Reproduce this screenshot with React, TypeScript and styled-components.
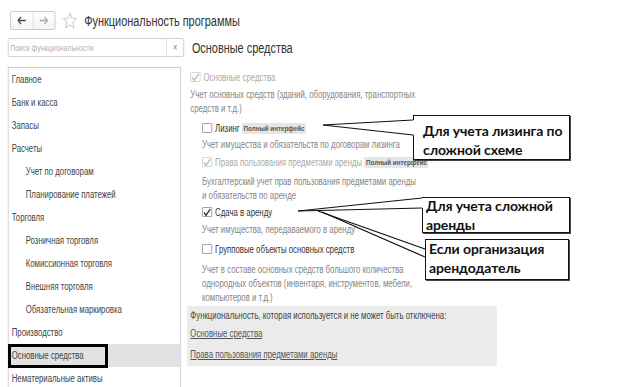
import React from "react";
import styled, { createGlobalStyle } from "styled-components";

// the screenshot is horizontally squeezed, so the 1C form is laid out
// at natural width and scaled on X
const SX = 0.78;

const Global = createGlobalStyle`
  html, body { margin: 0; padding: 0; background: #fff; }
  body { font-family: "Liberation Sans", Arial, sans-serif; overflow: hidden; }
`;

const Page = styled.div`
  position: relative;
  width: 620px;
  height: 387px;
  overflow: hidden;
  background: #fff;
`;

const Squeezed = styled.div`
  width: ${620 / SX}px;
  box-sizing: border-box;
  padding: 11px 0 0 10px;
  transform: scaleX(${SX});
  transform-origin: 0 0;
  color: #333;
`;

const TopRow = styled.div`
  display: flex;
  align-items: center;
  height: 19px;
`;

const NavGroup = styled.div`
  display: flex;
  width: 58px;
  height: 19px;
  margin-left: 3px;
  box-sizing: border-box;
  border: 1px solid #c6c6c6;
  border-radius: 2px;
  background: linear-gradient(#fff, #f4f4f4);
`;

const NavBtn = styled.div<{ $sep?: boolean }>`
  flex: 1;
  display: flex;
  align-items: center;
  justify-content: center;
  border-right: ${(p) => (p.$sep ? "1px solid #dcdcdc" : "none")};
`;

const StarWrap = styled.div`
  margin-left: 9px;
  display: flex;
`;

const Title = styled.div`
  margin-left: 9px;
  font-size: 14px;
  color: #333;
`;

const SearchRow = styled.div`
  display: flex;
  align-items: center;
  margin-top: 8px;
  height: 19px;
`;

const SearchBox = styled.div`
  display: flex;
  width: 226px;
  height: 19px;
  box-sizing: border-box;
  border: 1px solid #cbcbcb;
  border-radius: 2px;
`;

const Placeholder = styled.div`
  flex: 1;
  font-size: 9px;
  color: #b0b0b0;
  padding-left: 2px;
  display: flex;
  align-items: center;
`;

const Clear = styled.div`
  width: 21px;
  border-left: 1px solid #dedede;
  display: flex;
  align-items: center;
  justify-content: center;
  font-size: 10px;
  color: #888;
`;

const SectionTitle = styled.div`
  margin-left: 10px;
  font-size: 14px;
  color: #333;
`;

const Body = styled.div`
  display: flex;
  align-items: flex-start;
  margin-top: 10px;
`;

const NavPanel = styled.div`
  width: 222px;
  height: 330px;
  box-sizing: border-box;
  border: 1px solid #cacaca;
  border-bottom: none;
`;

const NavItem = styled.div<{ $level: number; $active?: boolean }>`
  height: 23px;
  display: flex;
  align-items: center;
  padding-left: ${(p) => (p.$level ? 22 : 4)}px;
  font-size: 10px;
  color: #444;
  background: ${(p) => (p.$active ? "#e2e2e2" : "transparent")};
`;

const Content = styled.div`
  margin-left: 8px;
  width: 397px;
`;

const OptionRow = styled.div<{ $indent: number; $mt: number }>`
  display: flex;
  align-items: center;
  height: 18px;
  margin-top: ${(p) => p.$mt}px;
  padding-left: ${(p) => p.$indent}px;
`;

const Box = styled.span<{ $disabled?: boolean }>`
  width: 12.8px;
  height: 10px;
  box-sizing: border-box;
  border: 1px solid ${(p) => (p.$disabled ? "#d0d0d0" : "#9a9a9a")};
  border-radius: 1px;
  background: #fff;
  display: flex;
  align-items: center;
  justify-content: center;
`;

const Label = styled.span<{ $disabled?: boolean }>`
  margin-left: 4px;
  font-size: 10px;
  color: ${(p) => (p.$disabled ? "#aaa" : "#333")};
`;

const Badge = styled.span`
  margin-left: 3px;
  padding: 1px 2px;
  font-size: 8px;
  font-weight: bold;
  color: #555;
  background: #e6e6e6;
`;

const Desc = styled.div<{ $indent: number; $mt: number }>`
  margin-top: ${(p) => p.$mt}px;
  padding-left: ${(p) => p.$indent}px;
  font-size: 10px;
  line-height: 14px;
  color: #858585;
`;

const InUse = styled.div`
  margin-top: 1px;
  height: 60px;
  box-sizing: border-box;
  padding: 3px 0 0 4px;
  background: #ebebeb;
  font-size: 10px;
  line-height: 14px;
  color: #444;
`;

const InUseLink = styled.div<{ $mt: number }>`
  margin-top: ${(p) => p.$mt}px;
  color: #555;
  text-decoration: underline;
`;

// annotations drawn over the screenshot
const Callout = styled.div<{ $x: number; $y: number; $w: number; $h: number; $pad: number }>`
  position: absolute;
  left: ${(p) => p.$x}px;
  top: ${(p) => p.$y}px;
  width: ${(p) => p.$w}px;
  height: ${(p) => p.$h}px;
  box-sizing: border-box;
  border: 1.5px solid #111;
  box-shadow: 1px 1px 0 #444;
  background: #fff;
  padding-left: ${(p) => p.$pad}px;
  font-family: "Lato", "Open Sans", "Noto Sans", sans-serif;
  font-weight: 700;
  font-size: 14px;
  line-height: 19px;
  color: #111;
  letter-spacing: -0.1px;
  white-space: nowrap;
`;

const CalloutText = styled.div<{ $mt: number }>`
  margin-top: ${(p) => p.$mt}px;
`;

const Marker = styled.div`
  position: absolute;
  left: 8px;
  top: 344px;
  width: 100px;
  height: 24px;
  box-sizing: border-box;
  border: 3px solid #000;
`;

const Lines = styled.svg`
  position: absolute;
  left: 0;
  top: 0;
  pointer-events: none;
`;

const Check = ({ color }: { color: string }) => (
  <svg width="11" height="9" viewBox="0 0 11 9" preserveAspectRatio="none">
    <path d="M1.5 4.5 L4.2 7.3 L9.8 1" fill="none" stroke={color} strokeWidth="1.6" />
  </svg>
);

type State = "off" | "on" | "on-disabled";

interface Option {
  label: string;
  level: number;
  state: State;
  badge?: boolean;
  desc: string[];
  mt: number;
  dmt: number;
}

const options: Option[] = [
  {
    label: "Основные средства",
    level: 0,
    state: "on-disabled",
    desc: ["Учет основных средств (зданий, оборудования, транспортных", "средств и т.д.)"],
    mt: 1,
    dmt: 2,
  },
  {
    label: "Лизинг",
    level: 1,
    state: "off",
    badge: true,
    desc: ["Учет имущества и обязательств  по договорам лизинга"],
    mt: 3,
    dmt: 1,
  },
  {
    label: "Права пользования предметами аренды",
    level: 1,
    state: "on-disabled",
    badge: true,
    desc: ["Бухгалтерский учет прав пользования предметами аренды", "и обязательств по аренде"],
    mt: 1,
    dmt: 4,
  },
  {
    label: "Сдача в аренду",
    level: 1,
    state: "on",
    desc: ["Учет имущества, передаваемого в аренду"],
    mt: 0,
    dmt: 2,
  },
  {
    label: "Групповые объекты основных средств",
    level: 1,
    state: "off",
    desc: [
      "Учет в составе основных средств большого количества",
      "однородных объектов (инвентаря, инструментов, мебели,",
      "компьютеров и т.д.)",
    ],
    mt: 3,
    dmt: 5,
  },
];

const navItems: [string, number][] = [
  ["Главное", 0],
  ["Банк и касса", 0],
  ["Запасы", 0],
  ["Расчеты", 0],
  ["Учет по договорам", 1],
  ["Планирование платежей", 1],
  ["Торговля", 0],
  ["Розничная торговля", 1],
  ["Комиссионная торговля", 1],
  ["Внешняя торговля", 1],
  ["Обязательная маркировка", 1],
  ["Производство", 0],
  ["Основные средства", 0],
  ["Нематериальные активы", 0],
];

const Arrow = ({ dir, color }: { dir: "l" | "r"; color: string }) => (
  <svg width="12" height="9" viewBox="0 0 12 9">
    {dir === "l" ? (
      <path d="M1 4.5 H11 M1 4.5 L5 1 M1 4.5 L5 8" stroke={color} strokeWidth="1.6" fill="none" />
    ) : (
      <path d="M11 4.5 H1 M11 4.5 L7 1 M11 4.5 L7 8" stroke={color} strokeWidth="1.6" fill="none" />
    )}
  </svg>
);

const Star = () => (
  <svg width="19" height="17" viewBox="0 0 19 17">
    <path
      d="M9.5 0.8 L11.9 6.2 L18 6.5 L13.3 10.2 L15 16.2 L9.5 12.9 L4 16.2 L5.7 10.2 L1 6.5 L7.1 6.2 Z"
      fill="none"
      stroke="#c2c2c2"
      strokeWidth="1"
    />
  </svg>
);

// wedge from a tip point to the left edge of a callout
const Wedge = ({ tip, x, y1, y2 }: { tip: [number, number]; x: number; y1: number; y2: number }) => (
  <g>
    <polygon points={`${tip[0]},${tip[1]} ${x + 2},${y1} ${x + 2},${y2}`} fill="#fff" />
    <line x1={tip[0]} y1={tip[1]} x2={x} y2={y1} stroke="#111" strokeWidth="1.2" />
    <line x1={tip[0]} y1={tip[1]} x2={x} y2={y2} stroke="#111" strokeWidth="1.2" />
  </g>
);

const App: React.FC = () => {
  return (
    <Page>
      <Global />
      <Squeezed>
        <TopRow>
          <NavGroup>
            <NavBtn $sep>
              <Arrow dir="l" color="#444" />
            </NavBtn>
            <NavBtn>
              <Arrow dir="r" color="#a8a8a8" />
            </NavBtn>
          </NavGroup>
          <StarWrap>
            <Star />
          </StarWrap>
          <Title>Функциональность программы</Title>
        </TopRow>
        <SearchRow>
          <SearchBox>
            <Placeholder>Поиск функциональности</Placeholder>
            <Clear>×</Clear>
          </SearchBox>
          <SectionTitle>Основные средства</SectionTitle>
        </SearchRow>
        <Body>
          <NavPanel>
            {navItems.map(([name, level]) => (
              <NavItem key={name + level} $level={level} $active={name === "Основные средства"}>
                {name}
              </NavItem>
            ))}
          </NavPanel>
          <Content>
            {options.map((o) => {
              const indent = o.level ? 19 : 4;
              const disabled = o.state === "on-disabled";
              return (
                <React.Fragment key={o.label}>
                  <OptionRow $indent={indent} $mt={o.mt}>
                    <Box $disabled={disabled}>
                      {o.state !== "off" && <Check color={disabled ? "#b8b8b8" : "#333"} />}
                    </Box>
                    <Label $disabled={disabled}>{o.label}</Label>
                    {o.badge && <Badge>Полный интерфейс</Badge>}
                  </OptionRow>
                  <Desc $indent={indent} $mt={o.dmt}>
                    {o.desc.map((d) => (
                      <div key={d}>{d}</div>
                    ))}
                  </Desc>
                </React.Fragment>
              );
            })}
            <InUse>
              <div>Функциональность, которая используется и не может быть отключена:</div>
              <InUseLink $mt={4}>Основные средства</InUseLink>
              <InUseLink $mt={7}>Права пользования предметами аренды</InUseLink>
            </InUse>
          </Content>
        </Body>
      </Squeezed>

      <Marker />
      <Callout $x={413} $y={115} $w={157} $h={45} $pad={9}>
        <CalloutText $mt={5}>Для учета лизинга по</CalloutText>
        <div>сложной схеме</div>
      </Callout>
      <Callout $x={422} $y={197} $w={148} $h={36} $pad={3}>
        <CalloutText $mt={-2}>Для учета сложной</CalloutText>
        <div>аренды</div>
      </Callout>
      <Callout $x={425} $y={239} $w={144} $h={41} $pad={3}>
        <CalloutText $mt={-1}>Если организация</CalloutText>
        <div>арендодатель</div>
      </Callout>
      <Lines width="620" height="387">
        <Wedge tip={[323, 125]} x={413} y1={120} y2={135} />
        <Wedge tip={[298, 211]} x={422} y1={198} y2={208} />
        <line x1={318} y1={211} x2={425} y2={249} stroke="#111" strokeWidth="1.2" />
        <line x1={322} y1={212} x2={425} y2={257} stroke="#111" strokeWidth="1.2" />
      </Lines>
    </Page>
  );
};

export default App;
